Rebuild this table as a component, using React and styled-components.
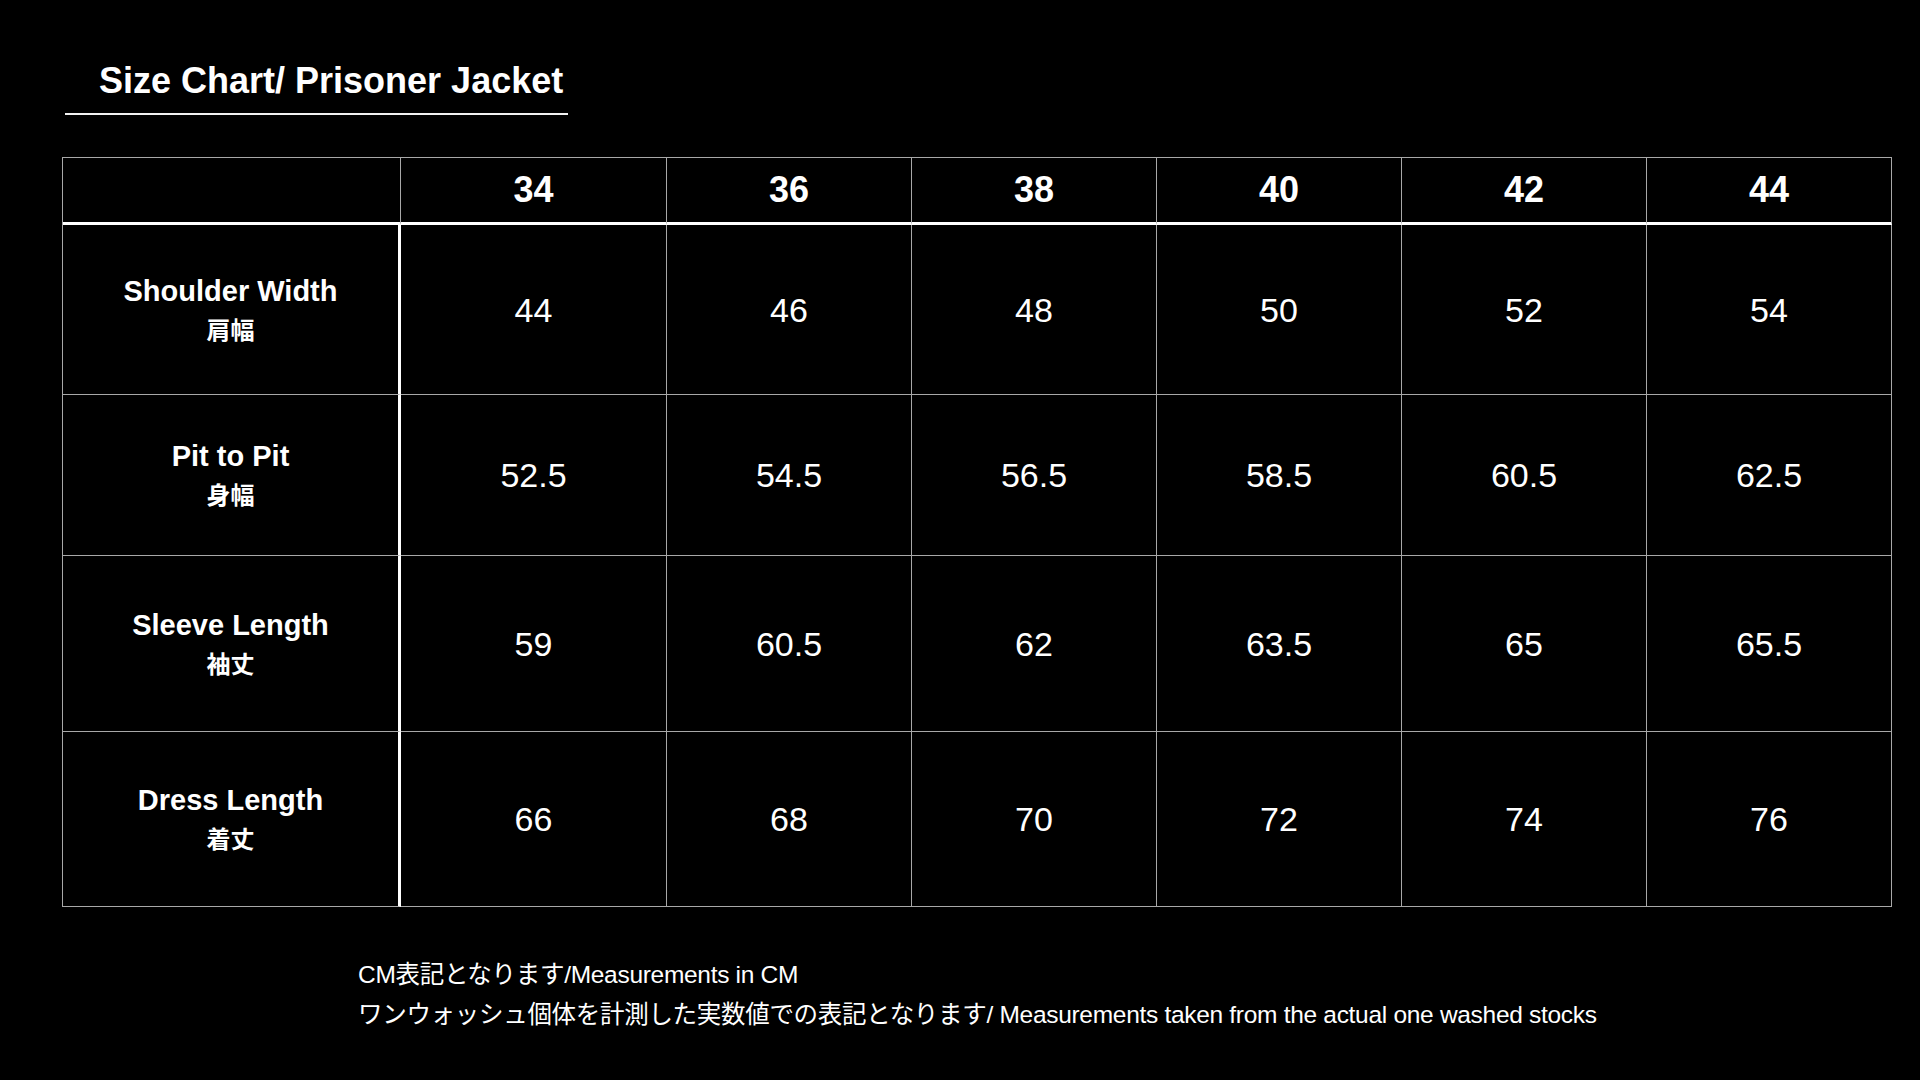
import styled, { createGlobalStyle } from "styled-components";

const GlobalStyle = createGlobalStyle`
  html, body {
    margin: 0;
    padding: 0;
    background: #000000;
  }
  body {
    font-family: "Liberation Sans", "Noto Sans CJK JP", sans-serif;
    color: #ffffff;
  }
`;

const StyledPage = styled.div`
  width: 1920px;
  height: 1080px;
  padding-top: 63px;
  box-sizing: border-box;
  background: #000000;
  overflow: hidden;
`;

const StyledTitle = styled.h1`
  margin: 0 0 0 65px;
  width: 503px;
  box-sizing: border-box;
  padding: 0 0 14px 34px;
  border-bottom: 2px solid #f2f2f2;
  font-size: 36px;
  line-height: 36px;
  font-weight: 700;
  white-space: nowrap;
`;

const StyledTable = styled.div`
  display: grid;
  grid-template-columns: 338px 266px repeat(5, 245px);
  grid-template-rows: 67px 170px 161px 176px 175px;
  margin: 42px 0 0 62px;
  width: max-content;
  border-top: 1px solid #a8a8a8;
  border-left: 1px solid #a8a8a8;
`;

const StyledCell = styled.div`
  display: flex;
  flex-direction: column;
  align-items: center;
  justify-content: center;
  box-sizing: border-box;
  border-right: ${({ $label }) => ($label ? "3px solid #ffffff" : "1px solid #a8a8a8")};
  border-bottom: ${({ $head }) => ($head ? "3px solid #ffffff" : "1px solid #a8a8a8")};
  font-size: ${({ $head }) => ($head ? "36px" : "34px")};
  font-weight: ${({ $head }) => ($head ? 700 : 400)};
  line-height: 1;
`;

const StyledCorner = styled(StyledCell)`
  border-right: 1px solid #a8a8a8;
`;

const StyledLabel = styled.div`
  font-size: 29px;
  font-weight: 700;
  line-height: 38px;
  text-align: center;
`;

const StyledLabelJa = styled.div`
  font-family: "Noto Sans CJK JP", sans-serif;
  font-size: 24px;
  font-weight: 700;
  line-height: 38px;
  text-align: center;
`;

const StyledNotes = styled.div`
  margin: 55px 0 0 358px;
  display: flex;
  flex-direction: column;
  gap: 14px;
  font-size: 24.5px;
  line-height: 26px;
  letter-spacing: -0.3px;
`;

const sizes = ["34", "36", "38", "40", "42", "44"];

const rows = [
  { en: "Shoulder Width", ja: "肩幅", values: ["44", "46", "48", "50", "52", "54"] },
  { en: "Pit to Pit", ja: "身幅", values: ["52.5", "54.5", "56.5", "58.5", "60.5", "62.5"] },
  { en: "Sleeve Length", ja: "袖丈", values: ["59", "60.5", "62", "63.5", "65", "65.5"] },
  { en: "Dress Length", ja: "着丈", values: ["66", "68", "70", "72", "74", "76"] },
];

const App = () => {
  return (
    <StyledPage>
      <GlobalStyle />
      <StyledTitle>Size Chart/ Prisoner Jacket</StyledTitle>
      <StyledTable>
        <StyledCorner $head />
        {sizes.map((s) => (
          <StyledCell key={s} $head>
            {s}
          </StyledCell>
        ))}
        {rows.map((row) => [
          <StyledCell key={row.en} $label>
            <StyledLabel>{row.en}</StyledLabel>
            <StyledLabelJa>{row.ja}</StyledLabelJa>
          </StyledCell>,
          ...row.values.map((v, i) => <StyledCell key={row.en + i}>{v}</StyledCell>),
        ])}
      </StyledTable>
      <StyledNotes>
        <div>CM表記となります/Measurements in CM</div>
        <div>ワンウォッシュ個体を計測した実数値での表記となります/ Measurements taken from the actual one washed stocks</div>
      </StyledNotes>
    </StyledPage>
  );
};

export default App;
